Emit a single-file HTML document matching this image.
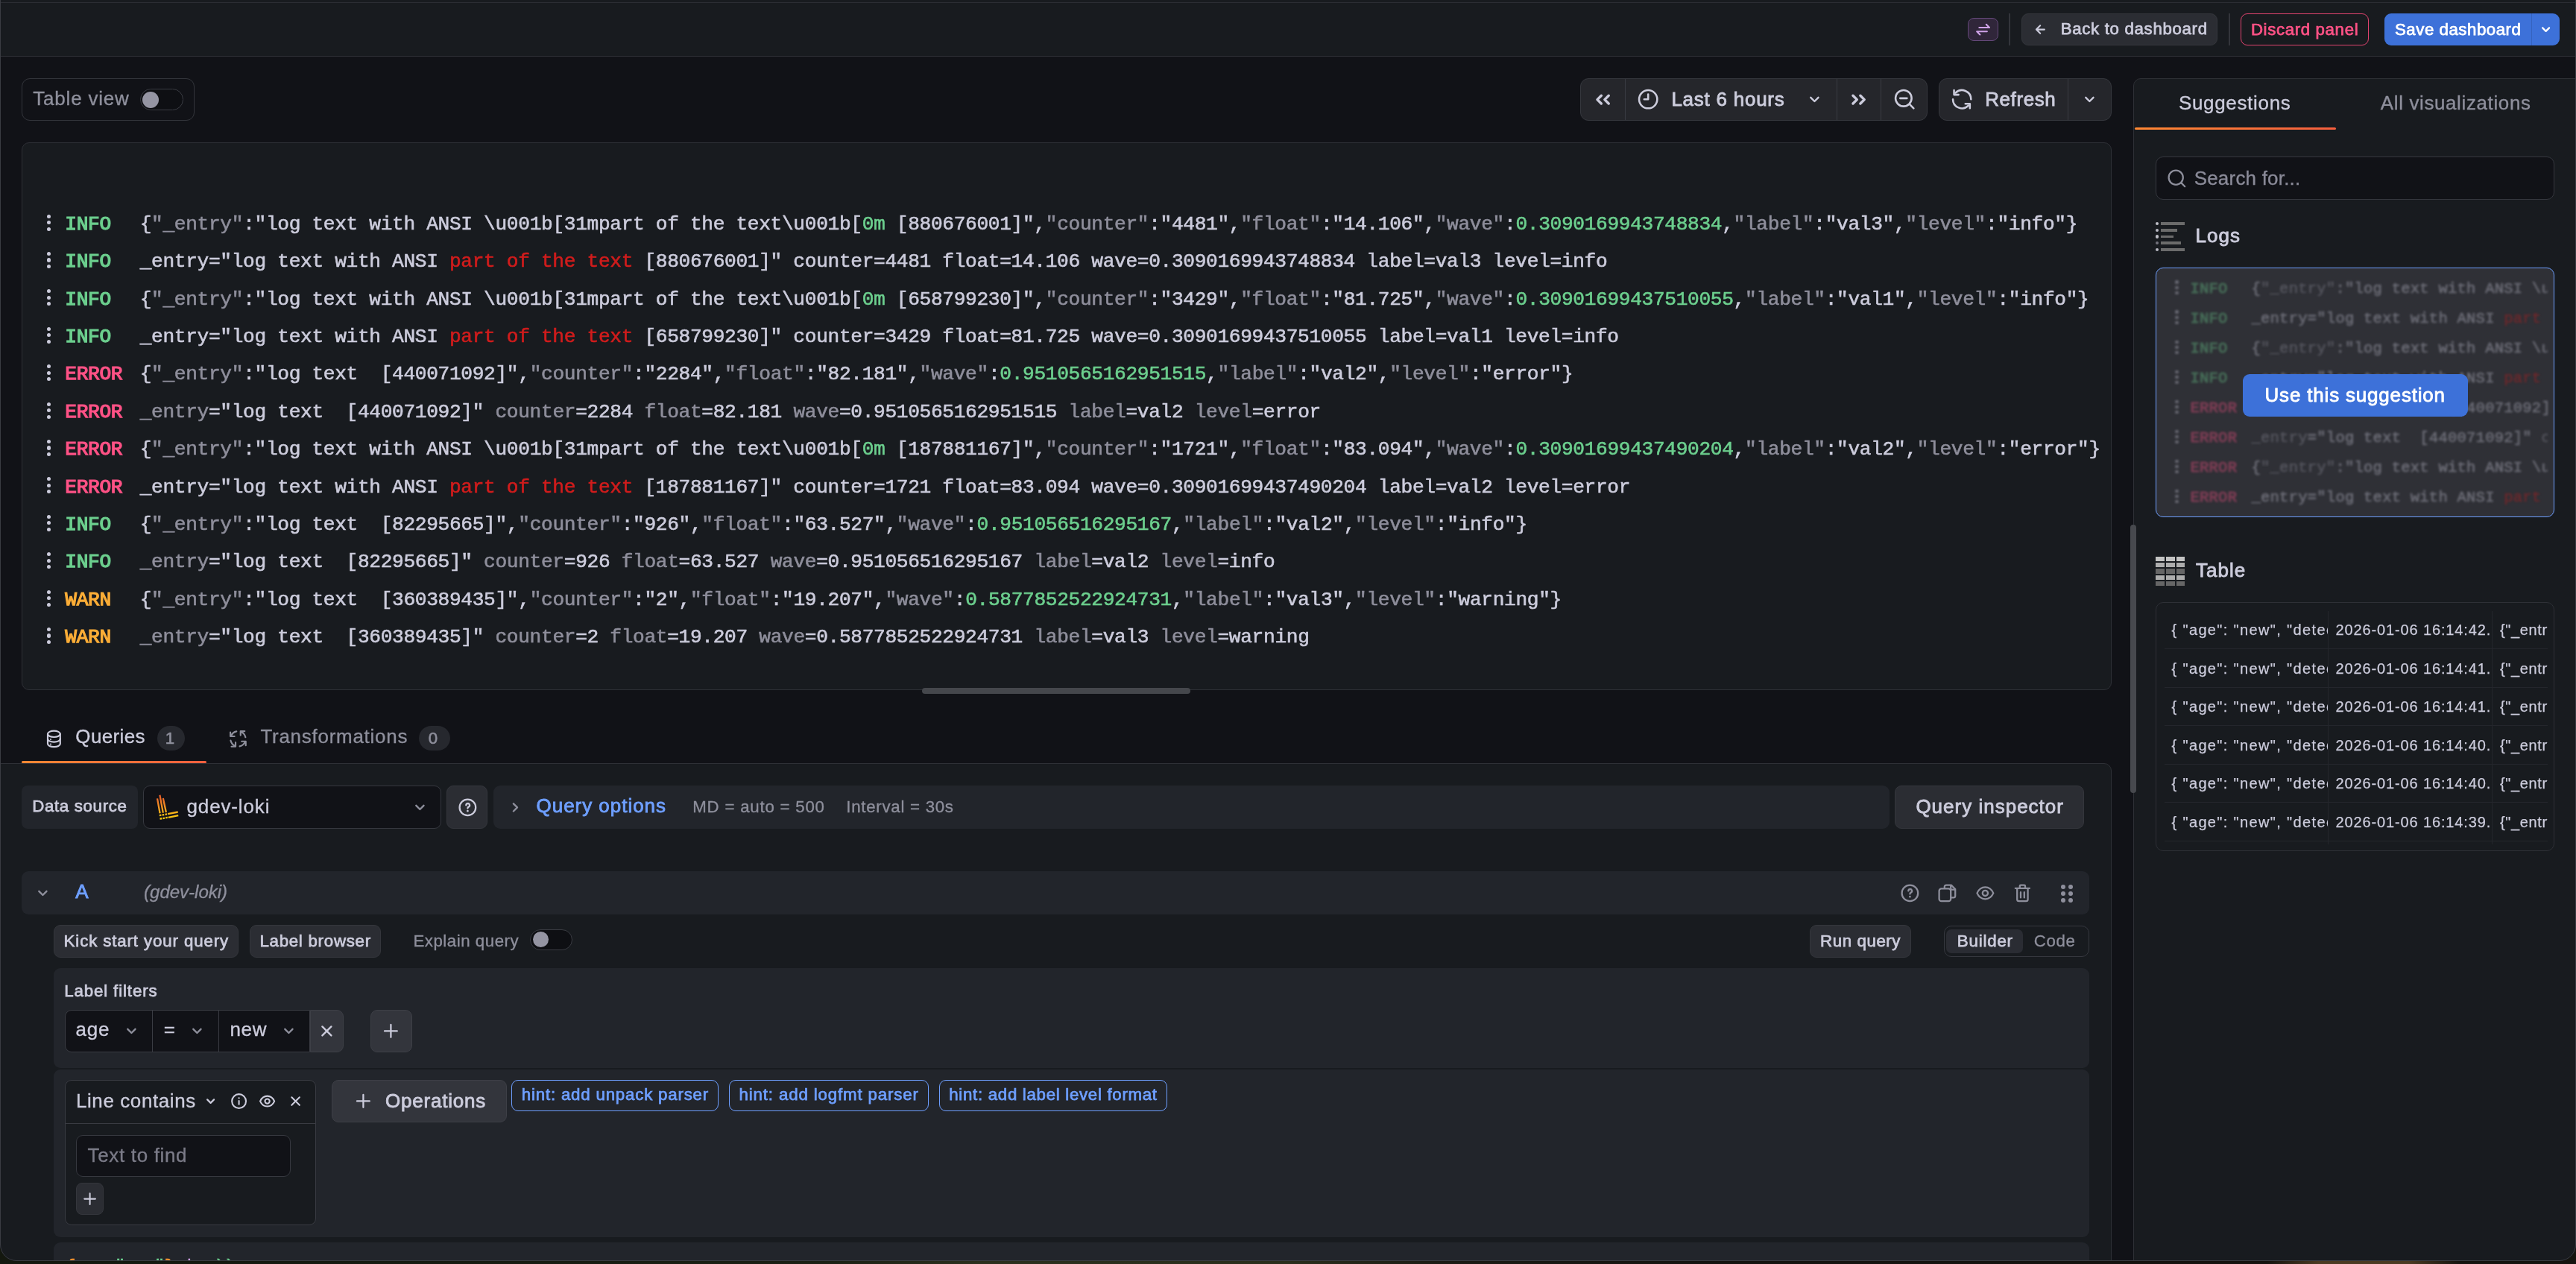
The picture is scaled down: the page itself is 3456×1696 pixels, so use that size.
<!DOCTYPE html>
<html lang="en"><head><meta charset="utf-8"><title>Edit panel - Grafana</title><style>
html,body{margin:0;padding:0;}
body{width:3456px;height:1696px;overflow:hidden;position:relative;background:linear-gradient(90deg,#14180f 0%,#161b11 17%,#1b2014 32%,#2b2f1d 38%,#2a2e1c 50%,#1b1b14 56%,#141310 67%,#15130f 88%,#4b3a22 90%,#4b3a22 93.500%,#15140f 95.500%,#15140f 100%);font-family:"Liberation Sans",sans-serif;}
#win{will-change:transform;position:absolute;left:0;top:0;width:3456px;height:1692px;overflow:hidden;border-radius:0 0 22px 22px;background:#111217;}
.b{position:absolute;box-sizing:border-box;}
.t{position:absolute;white-space:pre;font-family:"Liberation Sans",sans-serif;}
.m{font-family:"Liberation Mono",monospace;}
.i{position:absolute;overflow:visible;}
#frame{position:absolute;left:0;top:-30px;width:3456px;height:1722px;box-sizing:border-box;border:1px solid #3a3c42;border-radius:0 0 22px 22px;pointer-events:none;}
</style></head><body><div id="win">
<div class="b" style="left:0.0px;top:0.0px;width:3456.0px;height:1692.0px;background:#111217;border-radius:0 0 20px 20px;"></div>
<div class="b" style="left:0.0px;top:0.0px;width:3456.0px;height:4.0px;background:#181b1f;"></div>
<div class="b" style="left:0.0px;top:3.0px;width:3456.0px;height:1.0px;background:#2c2e34;"></div>
<div class="b" style="left:0.0px;top:4.0px;width:3456.0px;height:71.0px;background:#181b1f;"></div>
<div class="b" style="left:0.0px;top:75.0px;width:3456.0px;height:1.0px;background:#2e3036;"></div>
<div class="b" style="left:2640.0px;top:24.0px;width:41.0px;height:31.0px;background:#30263a;border:1px solid #65487a;border-radius:8px;"></div>
<svg class="i" style="left:2648.1px;top:26.8px;" width="25.2" height="25.2" viewBox="0 0 24 24" fill="none" stroke="#cfa3e8" stroke-width="2" stroke-linecap="round" stroke-linejoin="round"><path d="M7 9.500h13l-4-4M17 14.500H4l4 4"/></svg>
<div class="b" style="left:2695.0px;top:18.0px;width:2.0px;height:43.0px;background:#33353b;"></div>
<div class="b" style="left:2712.0px;top:18.0px;width:263.0px;height:43.0px;background:#2b2d33;border:1px solid #34363c;border-radius:9px;"></div>
<svg class="i" style="left:2725.3px;top:27.1px;" width="25.2" height="25.2" viewBox="0 0 24 24" fill="none" stroke="#ccccdc" stroke-width="2" stroke-linecap="round" stroke-linejoin="round"><path d="M17 12H7M11.600 7l-5 5 5 5"/></svg>
<span class="t" id="t1" style="left:2764.70px;top:25.39px;font-size:22.25px;line-height:27px;letter-spacing:0.678px;color:#ccccdc;-webkit-text-stroke:0.75px #ccccdc;">Back to dashboard</span>
<div class="b" style="left:2990.0px;top:18.0px;width:2.0px;height:43.0px;background:#33353b;"></div>
<div class="b" style="left:3006.0px;top:18.0px;width:172.0px;height:43.0px;border:1px solid #e0436f;border-radius:9px;"></div>
<span class="t" id="t2" style="left:3019.90px;top:25.59px;font-size:22.25px;line-height:27px;letter-spacing:0.638px;color:#ff5286;-webkit-text-stroke:0.75px #ff5286;">Discard panel</span>
<div class="b" style="left:3199.0px;top:18.0px;width:235.0px;height:43.0px;background:#3d71d9;border-radius:9px;"></div>
<div class="b" style="left:3395.5px;top:18.0px;width:1.0px;height:43.0px;background:#3563bd;"></div>
<span class="t" id="t3" style="left:3213.00px;top:25.59px;font-size:22.25px;line-height:27px;letter-spacing:0.526px;color:#ffffff;-webkit-text-stroke:0.75px #ffffff;">Save dashboard</span>
<svg class="i" style="left:3403.2px;top:27.0px;" width="25.2" height="25.2" viewBox="0 0 24 24" fill="none" stroke="#ffffff" stroke-width="2.2" stroke-linecap="round" stroke-linejoin="round"><path d="M7.750 9.900l4.250 4.250 4.250-4.250"/></svg>
<div class="b" style="left:29.0px;top:105.0px;width:232.0px;height:57.0px;border:1px solid #33353b;border-radius:11px;"></div>
<span class="t" id="t4" style="left:44.30px;top:117.30px;font-size:25.96px;line-height:31px;letter-spacing:0.810px;color:#8e8f9c;-webkit-text-stroke:0.35px #8e8f9c;">Table view</span>
<div class="b" style="left:188.0px;top:119.0px;width:58.0px;height:29.0px;background:#0e0f13;border:1px solid #3a3c43;border-radius:15px;"></div>
<div class="b" style="left:191.0px;top:122.5px;width:22.0px;height:22.0px;background:#9595a3;border-radius:11px;"></div>
<div class="b" style="left:2120.0px;top:105.0px;width:466.0px;height:57.0px;background:#25262b;border:1px solid #35373d;border-radius:11px;"></div>
<div class="b" style="left:2180.0px;top:106.0px;width:1.0px;height:55.0px;background:#393b42;"></div>
<div class="b" style="left:2464.0px;top:106.0px;width:1.0px;height:55.0px;background:#393b42;"></div>
<div class="b" style="left:2523.0px;top:106.0px;width:1.0px;height:55.0px;background:#393b42;"></div>
<svg class="i" style="left:2129.2px;top:111.9px;" width="43.2" height="43.2" viewBox="0 0 24 24" fill="none" stroke="#ccccdc" stroke-width="1.9" stroke-linecap="round" stroke-linejoin="round"><path d="M10.750 9l-3 3 3 3M16.250 9l-3 3 3 3"/></svg>
<svg class="i" style="left:2195.0px;top:116.8px;" width="32.4" height="32.4" viewBox="0 0 24 24" fill="none" stroke="#ccccdc" stroke-width="1.9" stroke-linecap="round" stroke-linejoin="round"><circle cx="12" cy="12" r="9"/><path d="M12 7v5H8"/></svg>
<span class="t" id="t5" style="left:2242.40px;top:118.30px;font-size:25.96px;line-height:31px;letter-spacing:0.775px;color:#ccccdc;-webkit-text-stroke:0.85px #ccccdc;">Last 6 hours</span>
<svg class="i" style="left:2420.2px;top:119.1px;" width="28.8" height="28.8" viewBox="0 0 24 24" fill="none" stroke="#ccccdc" stroke-width="2" stroke-linecap="round" stroke-linejoin="round"><path d="M7.750 9.900l4.250 4.250 4.250-4.250"/></svg>
<svg class="i" style="left:2471.9px;top:111.9px;" width="43.2" height="43.2" viewBox="0 0 24 24" fill="none" stroke="#ccccdc" stroke-width="1.9" stroke-linecap="round" stroke-linejoin="round"><path d="M13.250 9l3 3-3 3M7.750 9l3 3-3 3"/></svg>
<svg class="i" style="left:2539.2px;top:117.0px;" width="32.4" height="32.4" viewBox="0 0 24 24" fill="none" stroke="#ccccdc" stroke-width="1.9" stroke-linecap="round" stroke-linejoin="round"><circle cx="11" cy="11" r="8"/><path d="M7.600 11h6.800M17 17l4 4"/></svg>
<div class="b" style="left:2601.0px;top:105.0px;width:232.0px;height:57.0px;background:#25262b;border:1px solid #35373d;border-radius:11px;"></div>
<div class="b" style="left:2774.0px;top:106.0px;width:1.0px;height:55.0px;background:#393b42;"></div>
<svg class="i" style="left:2615.5px;top:117.0px;" width="32.4" height="32.4" viewBox="0 0 24 24" fill="none" stroke="#ccccdc" stroke-width="1.9" stroke-linecap="round" stroke-linejoin="round"><path d="M21 12A9 9 0 0 0 5.600 5.700M3 12a9 9 0 0 0 15.400 6.300"/><path d="M4.120 3v4.500h4.500M19.880 21v-4.500h-4.500"/></svg>
<span class="t" id="t6" style="left:2663.20px;top:118.30px;font-size:25.96px;line-height:31px;letter-spacing:0.617px;color:#ccccdc;-webkit-text-stroke:0.85px #ccccdc;">Refresh</span>
<svg class="i" style="left:2789.1px;top:119.1px;" width="28.8" height="28.8" viewBox="0 0 24 24" fill="none" stroke="#ccccdc" stroke-width="2" stroke-linecap="round" stroke-linejoin="round"><path d="M7.750 9.900l4.250 4.250 4.250-4.250"/></svg>
<div class="b" style="left:29.0px;top:191.0px;width:2804.0px;height:735.0px;background:#181b1f;border:1px solid #2e3036;border-radius:10px;"></div>
<div class="b" style="left:1236.7px;top:923.0px;width:360.4px;height:7.7px;background:#45474c;border-radius:4px;"></div>
<div class="b" style="left:62.7px;top:287.5px;width:5.2px;height:5.2px;border-radius:50%;background:#ccccdc"></div>
<div class="b" style="left:62.7px;top:296.0px;width:5.2px;height:5.2px;border-radius:50%;background:#ccccdc"></div>
<div class="b" style="left:62.7px;top:304.5px;width:5.2px;height:5.2px;border-radius:50%;background:#ccccdc"></div>
<span class="t m" style="left:87.30px;top:285.81px;font-size:26.2px;line-height:31px;letter-spacing:-0.335px;color:#ccccdc;-webkit-text-stroke:1.25px;"><span style="color:#6ccf8e">INFO</span></span>
<span class="t m" style="left:187.70px;top:285.81px;font-size:26.2px;line-height:31px;letter-spacing:-0.335px;color:#ccccdc;-webkit-text-stroke:0.6px;">{<span style="color:#8e8e9b">"_entry"</span>:"log text with ANSI \u001b[31mpart of the text\u001b[<span style="color:#6ccf8e">0m</span> [880676001]",<span style="color:#8e8e9b">"counter"</span>:"4481",<span style="color:#8e8e9b">"float"</span>:"14.106",<span style="color:#8e8e9b">"wave"</span>:<span style="color:#6ccf8e">0.3090169943748834</span>,<span style="color:#8e8e9b">"label"</span>:"val3",<span style="color:#8e8e9b">"level"</span>:"info"}</span>
<div class="b" style="left:62.7px;top:337.9px;width:5.2px;height:5.2px;border-radius:50%;background:#ccccdc"></div>
<div class="b" style="left:62.7px;top:346.4px;width:5.2px;height:5.2px;border-radius:50%;background:#ccccdc"></div>
<div class="b" style="left:62.7px;top:354.9px;width:5.2px;height:5.2px;border-radius:50%;background:#ccccdc"></div>
<span class="t m" style="left:87.30px;top:336.21px;font-size:26.2px;line-height:31px;letter-spacing:-0.335px;color:#ccccdc;-webkit-text-stroke:1.25px;"><span style="color:#6ccf8e">INFO</span></span>
<span class="t m" style="left:187.70px;top:336.21px;font-size:26.2px;line-height:31px;letter-spacing:-0.335px;color:#ccccdc;-webkit-text-stroke:0.6px;">_entry="log text with ANSI <span style="color:#d01c1c">part of the text</span> [880676001]" counter=4481 float=14.106 wave=0.3090169943748834 label=val3 level=info </span>
<div class="b" style="left:62.7px;top:388.3px;width:5.2px;height:5.2px;border-radius:50%;background:#ccccdc"></div>
<div class="b" style="left:62.7px;top:396.8px;width:5.2px;height:5.2px;border-radius:50%;background:#ccccdc"></div>
<div class="b" style="left:62.7px;top:405.3px;width:5.2px;height:5.2px;border-radius:50%;background:#ccccdc"></div>
<span class="t m" style="left:87.30px;top:386.61px;font-size:26.2px;line-height:31px;letter-spacing:-0.335px;color:#ccccdc;-webkit-text-stroke:1.25px;"><span style="color:#6ccf8e">INFO</span></span>
<span class="t m" style="left:187.70px;top:386.61px;font-size:26.2px;line-height:31px;letter-spacing:-0.335px;color:#ccccdc;-webkit-text-stroke:0.6px;">{<span style="color:#8e8e9b">"_entry"</span>:"log text with ANSI \u001b[31mpart of the text\u001b[<span style="color:#6ccf8e">0m</span> [658799230]",<span style="color:#8e8e9b">"counter"</span>:"3429",<span style="color:#8e8e9b">"float"</span>:"81.725",<span style="color:#8e8e9b">"wave"</span>:<span style="color:#6ccf8e">0.30901699437510055</span>,<span style="color:#8e8e9b">"label"</span>:"val1",<span style="color:#8e8e9b">"level"</span>:"info"}</span>
<div class="b" style="left:62.7px;top:438.7px;width:5.2px;height:5.2px;border-radius:50%;background:#ccccdc"></div>
<div class="b" style="left:62.7px;top:447.2px;width:5.2px;height:5.2px;border-radius:50%;background:#ccccdc"></div>
<div class="b" style="left:62.7px;top:455.7px;width:5.2px;height:5.2px;border-radius:50%;background:#ccccdc"></div>
<span class="t m" style="left:87.30px;top:437.01px;font-size:26.2px;line-height:31px;letter-spacing:-0.335px;color:#ccccdc;-webkit-text-stroke:1.25px;"><span style="color:#6ccf8e">INFO</span></span>
<span class="t m" style="left:187.70px;top:437.01px;font-size:26.2px;line-height:31px;letter-spacing:-0.335px;color:#ccccdc;-webkit-text-stroke:0.6px;">_entry="log text with ANSI <span style="color:#d01c1c">part of the text</span> [658799230]" counter=3429 float=81.725 wave=0.30901699437510055 label=val1 level=info </span>
<div class="b" style="left:62.7px;top:489.1px;width:5.2px;height:5.2px;border-radius:50%;background:#ccccdc"></div>
<div class="b" style="left:62.7px;top:497.6px;width:5.2px;height:5.2px;border-radius:50%;background:#ccccdc"></div>
<div class="b" style="left:62.7px;top:506.1px;width:5.2px;height:5.2px;border-radius:50%;background:#ccccdc"></div>
<span class="t m" style="left:87.30px;top:487.41px;font-size:26.2px;line-height:31px;letter-spacing:-0.335px;color:#ccccdc;-webkit-text-stroke:1.25px;"><span style="color:#ff5286">ERROR</span></span>
<span class="t m" style="left:187.70px;top:487.41px;font-size:26.2px;line-height:31px;letter-spacing:-0.335px;color:#ccccdc;-webkit-text-stroke:0.6px;">{<span style="color:#8e8e9b">"_entry"</span>:"log text  [440071092]",<span style="color:#8e8e9b">"counter"</span>:"2284",<span style="color:#8e8e9b">"float"</span>:"82.181",<span style="color:#8e8e9b">"wave"</span>:<span style="color:#6ccf8e">0.9510565162951515</span>,<span style="color:#8e8e9b">"label"</span>:"val2",<span style="color:#8e8e9b">"level"</span>:"error"}</span>
<div class="b" style="left:62.7px;top:539.5px;width:5.2px;height:5.2px;border-radius:50%;background:#ccccdc"></div>
<div class="b" style="left:62.7px;top:548.0px;width:5.2px;height:5.2px;border-radius:50%;background:#ccccdc"></div>
<div class="b" style="left:62.7px;top:556.5px;width:5.2px;height:5.2px;border-radius:50%;background:#ccccdc"></div>
<span class="t m" style="left:87.30px;top:537.81px;font-size:26.2px;line-height:31px;letter-spacing:-0.335px;color:#ccccdc;-webkit-text-stroke:1.25px;"><span style="color:#ff5286">ERROR</span></span>
<span class="t m" style="left:187.70px;top:537.81px;font-size:26.2px;line-height:31px;letter-spacing:-0.335px;color:#ccccdc;-webkit-text-stroke:0.6px;"><span style="color:#8e8e9b">_entry</span>="log text  [440071092]" <span style="color:#8e8e9b">counter</span>=2284 <span style="color:#8e8e9b">float</span>=82.181 <span style="color:#8e8e9b">wave</span>=0.9510565162951515 <span style="color:#8e8e9b">label</span>=val2 <span style="color:#8e8e9b">level</span>=error </span>
<div class="b" style="left:62.7px;top:589.9px;width:5.2px;height:5.2px;border-radius:50%;background:#ccccdc"></div>
<div class="b" style="left:62.7px;top:598.4px;width:5.2px;height:5.2px;border-radius:50%;background:#ccccdc"></div>
<div class="b" style="left:62.7px;top:606.9px;width:5.2px;height:5.2px;border-radius:50%;background:#ccccdc"></div>
<span class="t m" style="left:87.30px;top:588.21px;font-size:26.2px;line-height:31px;letter-spacing:-0.335px;color:#ccccdc;-webkit-text-stroke:1.25px;"><span style="color:#ff5286">ERROR</span></span>
<span class="t m" style="left:187.70px;top:588.21px;font-size:26.2px;line-height:31px;letter-spacing:-0.335px;color:#ccccdc;-webkit-text-stroke:0.6px;">{<span style="color:#8e8e9b">"_entry"</span>:"log text with ANSI \u001b[31mpart of the text\u001b[<span style="color:#6ccf8e">0m</span> [187881167]",<span style="color:#8e8e9b">"counter"</span>:"1721",<span style="color:#8e8e9b">"float"</span>:"83.094",<span style="color:#8e8e9b">"wave"</span>:<span style="color:#6ccf8e">0.30901699437490204</span>,<span style="color:#8e8e9b">"label"</span>:"val2",<span style="color:#8e8e9b">"level"</span>:"error"}</span>
<div class="b" style="left:62.7px;top:640.3px;width:5.2px;height:5.2px;border-radius:50%;background:#ccccdc"></div>
<div class="b" style="left:62.7px;top:648.8px;width:5.2px;height:5.2px;border-radius:50%;background:#ccccdc"></div>
<div class="b" style="left:62.7px;top:657.3px;width:5.2px;height:5.2px;border-radius:50%;background:#ccccdc"></div>
<span class="t m" style="left:87.30px;top:638.61px;font-size:26.2px;line-height:31px;letter-spacing:-0.335px;color:#ccccdc;-webkit-text-stroke:1.25px;"><span style="color:#ff5286">ERROR</span></span>
<span class="t m" style="left:187.70px;top:638.61px;font-size:26.2px;line-height:31px;letter-spacing:-0.335px;color:#ccccdc;-webkit-text-stroke:0.6px;">_entry="log text with ANSI <span style="color:#d01c1c">part of the text</span> [187881167]" counter=1721 float=83.094 wave=0.30901699437490204 label=val2 level=error </span>
<div class="b" style="left:62.7px;top:690.7px;width:5.2px;height:5.2px;border-radius:50%;background:#ccccdc"></div>
<div class="b" style="left:62.7px;top:699.2px;width:5.2px;height:5.2px;border-radius:50%;background:#ccccdc"></div>
<div class="b" style="left:62.7px;top:707.7px;width:5.2px;height:5.2px;border-radius:50%;background:#ccccdc"></div>
<span class="t m" style="left:87.30px;top:689.01px;font-size:26.2px;line-height:31px;letter-spacing:-0.335px;color:#ccccdc;-webkit-text-stroke:1.25px;"><span style="color:#6ccf8e">INFO</span></span>
<span class="t m" style="left:187.70px;top:689.01px;font-size:26.2px;line-height:31px;letter-spacing:-0.335px;color:#ccccdc;-webkit-text-stroke:0.6px;">{<span style="color:#8e8e9b">"_entry"</span>:"log text  [82295665]",<span style="color:#8e8e9b">"counter"</span>:"926",<span style="color:#8e8e9b">"float"</span>:"63.527",<span style="color:#8e8e9b">"wave"</span>:<span style="color:#6ccf8e">0.951056516295167</span>,<span style="color:#8e8e9b">"label"</span>:"val2",<span style="color:#8e8e9b">"level"</span>:"info"}</span>
<div class="b" style="left:62.7px;top:741.1px;width:5.2px;height:5.2px;border-radius:50%;background:#ccccdc"></div>
<div class="b" style="left:62.7px;top:749.6px;width:5.2px;height:5.2px;border-radius:50%;background:#ccccdc"></div>
<div class="b" style="left:62.7px;top:758.1px;width:5.2px;height:5.2px;border-radius:50%;background:#ccccdc"></div>
<span class="t m" style="left:87.30px;top:739.41px;font-size:26.2px;line-height:31px;letter-spacing:-0.335px;color:#ccccdc;-webkit-text-stroke:1.25px;"><span style="color:#6ccf8e">INFO</span></span>
<span class="t m" style="left:187.70px;top:739.41px;font-size:26.2px;line-height:31px;letter-spacing:-0.335px;color:#ccccdc;-webkit-text-stroke:0.6px;"><span style="color:#8e8e9b">_entry</span>="log text  [82295665]" <span style="color:#8e8e9b">counter</span>=926 <span style="color:#8e8e9b">float</span>=63.527 <span style="color:#8e8e9b">wave</span>=0.951056516295167 <span style="color:#8e8e9b">label</span>=val2 <span style="color:#8e8e9b">level</span>=info </span>
<div class="b" style="left:62.7px;top:791.5px;width:5.2px;height:5.2px;border-radius:50%;background:#ccccdc"></div>
<div class="b" style="left:62.7px;top:800.0px;width:5.2px;height:5.2px;border-radius:50%;background:#ccccdc"></div>
<div class="b" style="left:62.7px;top:808.5px;width:5.2px;height:5.2px;border-radius:50%;background:#ccccdc"></div>
<span class="t m" style="left:87.30px;top:789.81px;font-size:26.2px;line-height:31px;letter-spacing:-0.335px;color:#ccccdc;-webkit-text-stroke:1.25px;"><span style="color:#fbad37">WARN</span></span>
<span class="t m" style="left:187.70px;top:789.81px;font-size:26.2px;line-height:31px;letter-spacing:-0.335px;color:#ccccdc;-webkit-text-stroke:0.6px;">{<span style="color:#8e8e9b">"_entry"</span>:"log text  [360389435]",<span style="color:#8e8e9b">"counter"</span>:"2",<span style="color:#8e8e9b">"float"</span>:"19.207",<span style="color:#8e8e9b">"wave"</span>:<span style="color:#6ccf8e">0.5877852522924731</span>,<span style="color:#8e8e9b">"label"</span>:"val3",<span style="color:#8e8e9b">"level"</span>:"warning"}</span>
<div class="b" style="left:62.7px;top:841.9px;width:5.2px;height:5.2px;border-radius:50%;background:#ccccdc"></div>
<div class="b" style="left:62.7px;top:850.4px;width:5.2px;height:5.2px;border-radius:50%;background:#ccccdc"></div>
<div class="b" style="left:62.7px;top:858.9px;width:5.2px;height:5.2px;border-radius:50%;background:#ccccdc"></div>
<span class="t m" style="left:87.30px;top:840.21px;font-size:26.2px;line-height:31px;letter-spacing:-0.335px;color:#ccccdc;-webkit-text-stroke:1.25px;"><span style="color:#fbad37">WARN</span></span>
<span class="t m" style="left:187.70px;top:840.21px;font-size:26.2px;line-height:31px;letter-spacing:-0.335px;color:#ccccdc;-webkit-text-stroke:0.6px;"><span style="color:#8e8e9b">_entry</span>="log text  [360389435]" <span style="color:#8e8e9b">counter</span>=2 <span style="color:#8e8e9b">float</span>=19.207 <span style="color:#8e8e9b">wave</span>=0.5877852522924731 <span style="color:#8e8e9b">label</span>=val3 <span style="color:#8e8e9b">level</span>=warning </span>
<svg class="i" style="left:57.8px;top:977.3px;" width="28.8" height="28.8" viewBox="0 0 24 24" fill="none" stroke="#ccccdc" stroke-width="1.8" stroke-linecap="round" stroke-linejoin="round"><path d="M5 6.500C5 4.600 8.100 3 12 3s7 1.600 7 3.500v11c0 1.900-3.100 3.500-7 3.500s-7-1.600-7-3.500z"/><path d="M5 6.500C5 8.400 8.100 10 12 10s7-1.600 7-3.500M5 12c0 1.900 3.100 3.500 7 3.500s7-1.600 7-3.500"/><circle cx="8.300" cy="12.600" r=".350" stroke-width="1.200"/><circle cx="8.300" cy="18" r=".350" stroke-width="1.200"/></svg>
<span class="t" id="t7" style="left:101.30px;top:973.00px;font-size:25.96px;line-height:31px;letter-spacing:0.400px;color:#ccccdc;-webkit-text-stroke:0.35px #ccccdc;">Queries</span>
<div class="b" style="left:210.5px;top:974.0px;width:37.5px;height:33.0px;background:#26282e;border-radius:17px;"></div>
<span class="t" id="t8" style="left:221.80px;top:976.59px;font-size:22.25px;line-height:27px;letter-spacing:0.000px;color:#8e8f9c;-webkit-text-stroke:0.6px #8e8f9c;">1</span>
<svg class="i" style="left:305.0px;top:977.3px;" width="28.8" height="28.8" viewBox="0 0 24 24" fill="none" stroke="#8e8f9c" stroke-width="1.8" stroke-linecap="round" stroke-linejoin="round"><path d="M4.18 8.68A8.500 8.500 0 0 1 10.23 3.69M3.400 4.600v4.600h4.600"/><g transform="rotate(90 12 12)"><path d="M4.18 8.68A8.500 8.500 0 0 1 10.23 3.69M3.400 4.600v4.600h4.600"/></g><g transform="rotate(180 12 12)"><path d="M4.18 8.68A8.500 8.500 0 0 1 10.23 3.69M3.400 4.600v4.600h4.600"/></g><g transform="rotate(270 12 12)"><path d="M4.18 8.68A8.500 8.500 0 0 1 10.23 3.69M3.400 4.600v4.600h4.600"/></g></svg>
<span class="t" id="t9" style="left:349.40px;top:973.00px;font-size:25.96px;line-height:31px;letter-spacing:0.750px;color:#8e8f9c;-webkit-text-stroke:0.35px #8e8f9c;">Transformations</span>
<div class="b" style="left:561.5px;top:974.0px;width:42.0px;height:33.0px;background:#26282e;border-radius:17px;"></div>
<span class="t" id="t10" style="left:574.80px;top:976.59px;font-size:22.25px;line-height:27px;letter-spacing:0.000px;color:#8e8f9c;-webkit-text-stroke:0.6px #8e8f9c;">0</span>
<div class="b" style="left:-4.0px;top:1024.0px;width:2837.0px;height:676.0px;background:#181b1f;border:1px solid #2e3036;border-radius:0 10px 0 0;"></div>
<div class="b" style="left:29.4px;top:1020.5px;width:247.4px;height:3.7px;border-radius:2px;background:linear-gradient(90deg,#ff8833,#f55f3e);"></div>
<div class="b" style="left:29.4px;top:1054.0px;width:155.2px;height:58.0px;background:#22252b;border-radius:8px;"></div>
<span class="t" id="t11" style="left:43.20px;top:1068.39px;font-size:22.25px;line-height:27px;letter-spacing:0.673px;color:#ccccdc;-webkit-text-stroke:0.75px #ccccdc;">Data source</span>
<div class="b" style="left:192.3px;top:1054.0px;width:399.3px;height:58.0px;background:#111217;border:1px solid #36383f;border-radius:9px;"></div>
<span class="t" id="t12" style="left:250.50px;top:1066.50px;font-size:25.96px;line-height:31px;letter-spacing:0.888px;color:#ccccdc;-webkit-text-stroke:0.35px #ccccdc;">gdev-loki</span>
<svg class="i" style="left:549.3px;top:1069.2px;" width="28.8" height="28.8" viewBox="0 0 24 24" fill="none" stroke="#8e8f9c" stroke-width="2" stroke-linecap="round" stroke-linejoin="round"><path d="M7.750 9.900l4.250 4.250 4.250-4.250"/></svg>
<div class="b" style="left:599.3px;top:1054.0px;width:55.2px;height:58.0px;background:#2b2d33;border:1px solid #34363c;border-radius:9px;"></div>
<svg class="i" style="left:613.0px;top:1068.8px;" width="28.8" height="28.8" viewBox="0 0 24 24" fill="none" stroke="#ccccdc" stroke-width="1.9" stroke-linecap="round" stroke-linejoin="round"><circle cx="12" cy="12" r="9"/><path d="M10.250 9.500a2 2 0 1 1 2.750 1.850c-.600.300-1 .800-1 1.650"/><circle cx="12" cy="16" r=".550" stroke-width="1.200"/></svg>
<div class="b" style="left:662.0px;top:1054.0px;width:1873.0px;height:58.0px;background:#22252b;border-radius:9px;"></div>
<svg class="i" style="left:676.6px;top:1069.4px;" width="28.8" height="28.8" viewBox="0 0 24 24" fill="none" stroke="#8e8f9c" stroke-width="2" stroke-linecap="round" stroke-linejoin="round"><path d="M9.900 7.750l4.250 4.250-4.250 4.250"/></svg>
<span class="t" id="t13" style="left:719.60px;top:1066.30px;font-size:25.96px;line-height:31px;letter-spacing:0.982px;color:#6e9fff;-webkit-text-stroke:0.85px #6e9fff;">Query options</span>
<span class="t" id="t14" style="left:929.30px;top:1068.79px;font-size:22.25px;line-height:27px;letter-spacing:0.782px;color:#8e8f9c;-webkit-text-stroke:0.35px #8e8f9c;">MD = auto = 500</span>
<span class="t" id="t15" style="left:1135.30px;top:1068.79px;font-size:22.25px;line-height:27px;letter-spacing:0.731px;color:#8e8f9c;-webkit-text-stroke:0.35px #8e8f9c;">Interval = 30s</span>
<div class="b" style="left:2542.0px;top:1054.0px;width:254.0px;height:58.0px;background:#2b2d33;border:1px solid #34363c;border-radius:9px;"></div>
<span class="t" id="t16" style="left:2570.40px;top:1067.20px;font-size:25.96px;line-height:31px;letter-spacing:1.025px;color:#ccccdc;-webkit-text-stroke:0.85px #ccccdc;">Query inspector</span>
<svg class="i" style="left:205px;top:1062px" width="40" height="42" viewBox="205 1062 40 42">
<defs><linearGradient id="lk" x1="0" y1="1066" x2="0" y2="1100" gradientUnits="userSpaceOnUse"><stop offset="0" stop-color="#e9572b"/><stop offset=".55" stop-color="#f49b22"/><stop offset="1" stop-color="#fbd20a"/></linearGradient></defs>
<g stroke="url(#lk)" stroke-width="2.300" fill="none">
<path d="M211 1071.400L214.600 1091.300M214.400 1066.800L218.800 1090.600M218.800 1071L222.900 1090"/>
<path d="M225.100 1092.200L238.700 1089.500M225.800 1096.800L239.200 1094.200"/>
<path stroke-dasharray="2.600 1.300" d="M213.800 1094.200L224.200 1092.300M214.500 1098.700L224.800 1096.900"/>
</g></svg>
<div class="b" style="left:29.4px;top:1169.0px;width:2773.2px;height:58.0px;background:#22252b;border-radius:9px;"></div>
<svg class="i" style="left:43.0px;top:1183.9px;" width="28.8" height="28.8" viewBox="0 0 24 24" fill="none" stroke="#8e8f9c" stroke-width="2" stroke-linecap="round" stroke-linejoin="round"><path d="M7.750 9.900l4.250 4.250 4.250-4.250"/></svg>
<span class="t" id="t17" style="left:101.30px;top:1180.70px;font-size:25.96px;line-height:31px;letter-spacing:0.000px;color:#6e9fff;-webkit-text-stroke:0.85px #6e9fff;">A</span>
<span class="t" id="t18" style="left:193.10px;top:1182.35px;font-size:24.1px;line-height:29px;letter-spacing:-0.050px;color:#8e8f9c;font-style:italic;-webkit-text-stroke:0.35px #8e8f9c;">(gdev-loki)</span>
<svg class="i" style="left:2548.0px;top:1183.8px;" width="28.8" height="28.8" viewBox="0 0 24 24" fill="none" stroke="#8e8f9c" stroke-width="1.9" stroke-linecap="round" stroke-linejoin="round"><circle cx="12" cy="12" r="9"/><path d="M10.250 9.500a2 2 0 1 1 2.750 1.850c-.600.300-1 .800-1 1.650"/><circle cx="12" cy="16" r=".550" stroke-width="1.200"/></svg>
<svg class="i" style="left:2597.8px;top:1184.1px;" width="28.8" height="28.8" viewBox="0 0 24 24" fill="none" stroke="#8e8f9c" stroke-width="1.9" stroke-linecap="round" stroke-linejoin="round"><path d="M9 6V5a2 2 0 0 1 2-2h5.500L21 7.500V15a2 2 0 0 1-2 2h-3"/><path d="M16 3.500V8h4.500"/><rect x="3" y="7" width="13" height="14" rx="2.500"/></svg>
<svg class="i" style="left:2649.0px;top:1184.0px;" width="28.8" height="28.8" viewBox="0 0 24 24" fill="none" stroke="#8e8f9c" stroke-width="1.9" stroke-linecap="round" stroke-linejoin="round"><path d="M2.900 12C4.900 7.600 8.300 5.400 12 5.400s7.100 2.200 9.100 6.600c-2 4.400-5.400 6.600-9.100 6.600S4.900 16.400 2.900 12z"/><circle cx="12" cy="12" r="3"/></svg>
<svg class="i" style="left:2699.0px;top:1184.1px;" width="28.8" height="28.8" viewBox="0 0 24 24" fill="none" stroke="#8e8f9c" stroke-width="1.9" stroke-linecap="round" stroke-linejoin="round"><path d="M4 6.500h16M9 6.500V4a1 1 0 0 1 1-1h4a1 1 0 0 1 1 1v2.500M6 6.500V19a2 2 0 0 0 2 2h8a2 2 0 0 0 2-2V6.500M10 11v6M14 11v6"/></svg>
<div class="b" style="left:2765.4px;top:1187.2px;width:5.8px;height:5.8px;background:#8e8f9c;border-radius:3px;"></div>
<div class="b" style="left:2765.4px;top:1196.3px;width:5.8px;height:5.8px;background:#8e8f9c;border-radius:3px;"></div>
<div class="b" style="left:2765.4px;top:1205.4px;width:5.8px;height:5.8px;background:#8e8f9c;border-radius:3px;"></div>
<div class="b" style="left:2775.2px;top:1187.2px;width:5.8px;height:5.8px;background:#8e8f9c;border-radius:3px;"></div>
<div class="b" style="left:2775.2px;top:1196.3px;width:5.8px;height:5.8px;background:#8e8f9c;border-radius:3px;"></div>
<div class="b" style="left:2775.2px;top:1205.4px;width:5.8px;height:5.8px;background:#8e8f9c;border-radius:3px;"></div>
<div class="b" style="left:72.0px;top:1241.3px;width:248.0px;height:43.3px;background:#2b2d33;border:1px solid #34363c;border-radius:9px;"></div>
<span class="t" id="t19" style="left:85.60px;top:1248.79px;font-size:22.25px;line-height:27px;letter-spacing:0.885px;color:#ccccdc;-webkit-text-stroke:0.75px #ccccdc;">Kick start your query</span>
<div class="b" style="left:335.2px;top:1241.3px;width:175.6px;height:43.3px;background:#2b2d33;border:1px solid #34363c;border-radius:9px;"></div>
<span class="t" id="t20" style="left:348.40px;top:1248.79px;font-size:22.25px;line-height:27px;letter-spacing:0.745px;color:#ccccdc;-webkit-text-stroke:0.75px #ccccdc;">Label browser</span>
<span class="t" id="t21" style="left:554.40px;top:1248.79px;font-size:22.25px;line-height:27px;letter-spacing:0.540px;color:#8e8f9c;-webkit-text-stroke:0.35px #8e8f9c;">Explain query</span>
<div class="b" style="left:711.0px;top:1246.5px;width:56.5px;height:28.3px;background:#0e0f13;border:1px solid #3a3c43;border-radius:15px;"></div>
<div class="b" style="left:714.5px;top:1249.8px;width:21.5px;height:21.5px;background:#9595a3;border-radius:11px;"></div>
<div class="b" style="left:2428.0px;top:1241.3px;width:136.0px;height:43.3px;background:#2b2d33;border:1px solid #34363c;border-radius:9px;"></div>
<span class="t" id="t22" style="left:2442.00px;top:1248.79px;font-size:22.25px;line-height:27px;letter-spacing:0.605px;color:#ccccdc;-webkit-text-stroke:0.75px #ccccdc;">Run query</span>
<div class="b" style="left:2607.5px;top:1242.4px;width:195.1px;height:41.2px;border:1px solid #36383f;border-radius:10px;"></div>
<div class="b" style="left:2611.0px;top:1247.0px;width:103.0px;height:32.0px;background:#2a2c33;border-radius:7px;"></div>
<span class="t" id="t23" style="left:2625.80px;top:1248.79px;font-size:22.25px;line-height:27px;letter-spacing:0.823px;color:#ccccdc;-webkit-text-stroke:0.75px #ccccdc;">Builder</span>
<span class="t" id="t24" style="left:2728.80px;top:1248.79px;font-size:22.25px;line-height:27px;letter-spacing:0.602px;color:#8e8f9c;-webkit-text-stroke:0.3px #8e8f9c;">Code</span>
<div class="b" style="left:72.0px;top:1299.0px;width:2730.6px;height:134.0px;background:#22252b;border-radius:9px;"></div>
<span class="t" id="t25" style="left:86.20px;top:1316.19px;font-size:22.25px;line-height:27px;letter-spacing:0.885px;color:#ccccdc;-webkit-text-stroke:0.75px #ccccdc;">Label filters</span>
<div class="b" style="left:86.7px;top:1354.5px;width:329.6px;height:57.0px;background:#111217;border:1px solid #3a3c43;border-radius:9px 0 0 9px;"></div>
<div class="b" style="left:204.3px;top:1355.5px;width:1.0px;height:55.0px;background:#3a3c43;"></div>
<div class="b" style="left:293.0px;top:1355.5px;width:1.0px;height:55.0px;background:#3a3c43;"></div>
<span class="t" id="t26" style="left:101.60px;top:1365.70px;font-size:25.96px;line-height:31px;letter-spacing:0.793px;color:#ccccdc;-webkit-text-stroke:0.35px #ccccdc;">age</span>
<svg class="i" style="left:161.5px;top:1368.8px;" width="28.8" height="28.8" viewBox="0 0 24 24" fill="none" stroke="#8e8f9c" stroke-width="2" stroke-linecap="round" stroke-linejoin="round"><path d="M7.750 9.900l4.250 4.250 4.250-4.250"/></svg>
<span class="t" id="t27" style="left:219.80px;top:1365.70px;font-size:25.96px;line-height:31px;letter-spacing:0.000px;color:#ccccdc;-webkit-text-stroke:0.35px #ccccdc;">=</span>
<svg class="i" style="left:250.1px;top:1368.8px;" width="28.8" height="28.8" viewBox="0 0 24 24" fill="none" stroke="#8e8f9c" stroke-width="2" stroke-linecap="round" stroke-linejoin="round"><path d="M7.750 9.900l4.250 4.250 4.250-4.250"/></svg>
<span class="t" id="t28" style="left:308.50px;top:1365.70px;font-size:25.96px;line-height:31px;letter-spacing:0.688px;color:#ccccdc;-webkit-text-stroke:0.35px #ccccdc;">new</span>
<svg class="i" style="left:373.1px;top:1368.8px;" width="28.8" height="28.8" viewBox="0 0 24 24" fill="none" stroke="#8e8f9c" stroke-width="2" stroke-linecap="round" stroke-linejoin="round"><path d="M7.750 9.900l4.250 4.250 4.250-4.250"/></svg>
<div class="b" style="left:416.3px;top:1354.5px;width:44.4px;height:57.0px;background:#33353c;border:1px solid #3d3f46;border-radius:0 9px 9px 0;"></div>
<svg class="i" style="left:424.1px;top:1368.6px;" width="28.8" height="28.8" viewBox="0 0 24 24" fill="none" stroke="#ccccdc" stroke-width="2" stroke-linecap="round" stroke-linejoin="round"><path d="M7 7l10 10M17 7L7 17"/></svg>
<div class="b" style="left:497.4px;top:1354.5px;width:55.4px;height:57.0px;background:#33353c;border:1px solid #3d3f46;border-radius:9px;"></div>
<svg class="i" style="left:510.0px;top:1368.9px;" width="28.8" height="28.8" viewBox="0 0 24 24" fill="none" stroke="#ccccdc" stroke-width="1.9" stroke-linecap="round" stroke-linejoin="round"><path d="M12 5v14M5 12h14"/></svg>
<div class="b" style="left:72.0px;top:1434.5px;width:2730.6px;height:225.5px;background:#22252b;border-radius:9px;"></div>
<div class="b" style="left:86.7px;top:1448.6px;width:336.9px;height:195.6px;background:#181b1f;border:1px solid #393b42;border-radius:9px;"></div>
<div class="b" style="left:87.7px;top:1507.0px;width:334.9px;height:1.0px;background:#393b42;"></div>
<span class="t" id="t29" style="left:101.90px;top:1461.50px;font-size:25.96px;line-height:31px;letter-spacing:0.618px;color:#ccccdc;-webkit-text-stroke:0.35px #ccccdc;">Line contains</span>
<svg class="i" style="left:270.3px;top:1465.2px;" width="25.2" height="25.2" viewBox="0 0 24 24" fill="none" stroke="#ccccdc" stroke-width="2.1" stroke-linecap="round" stroke-linejoin="round"><path d="M7.750 9.900l4.250 4.250 4.250-4.250"/></svg>
<svg class="i" style="left:307.8px;top:1464.8px;" width="25.2" height="25.2" viewBox="0 0 24 24" fill="none" stroke="#ccccdc" stroke-width="2" stroke-linecap="round" stroke-linejoin="round"><circle cx="12" cy="12" r="9"/><path d="M12 11.500v4.500"/><circle cx="12" cy="8" r=".450" stroke-width="1.300"/></svg>
<svg class="i" style="left:346.1px;top:1464.8px;" width="25.2" height="25.2" viewBox="0 0 24 24" fill="none" stroke="#ccccdc" stroke-width="2" stroke-linecap="round" stroke-linejoin="round"><path d="M2.900 12C4.900 7.600 8.300 5.400 12 5.400s7.100 2.200 9.100 6.600c-2 4.400-5.400 6.600-9.100 6.600S4.900 16.400 2.900 12z"/><circle cx="12" cy="12" r="3"/></svg>
<svg class="i" style="left:383.9px;top:1464.8px;" width="25.2" height="25.2" viewBox="0 0 24 24" fill="none" stroke="#ccccdc" stroke-width="2" stroke-linecap="round" stroke-linejoin="round"><path d="M7 7l10 10M17 7L7 17"/></svg>
<div class="b" style="left:102.4px;top:1522.7px;width:287.2px;height:56.8px;background:#111217;border:1px solid #36383f;border-radius:9px;"></div>
<span class="t" id="t30" style="left:117.60px;top:1535.30px;font-size:25.96px;line-height:31px;letter-spacing:0.678px;color:#7b7b88;-webkit-text-stroke:0.35px #7b7b88;">Text to find</span>
<div class="b" style="left:102.4px;top:1587.0px;width:37.1px;height:43.0px;background:#2b2d33;border:1px solid #34363c;border-radius:8px;"></div>
<svg class="i" style="left:108.4px;top:1595.9px;" width="25.2" height="25.2" viewBox="0 0 24 24" fill="none" stroke="#ccccdc" stroke-width="2" stroke-linecap="round" stroke-linejoin="round"><path d="M12 5v14M5 12h14"/></svg>
<div class="b" style="left:445.3px;top:1448.6px;width:234.4px;height:57.1px;background:#33353c;border:1px solid #3d3f46;border-radius:9px;"></div>
<svg class="i" style="left:473.0px;top:1462.6px;" width="28.8" height="28.8" viewBox="0 0 24 24" fill="none" stroke="#ccccdc" stroke-width="1.9" stroke-linecap="round" stroke-linejoin="round"><path d="M12 5v14M5 12h14"/></svg>
<span class="t" id="t31" style="left:516.90px;top:1461.50px;font-size:25.96px;line-height:31px;letter-spacing:0.823px;color:#ccccdc;-webkit-text-stroke:0.85px #ccccdc;">Operations</span>
<div class="b" style="left:686.3px;top:1448.5px;width:277.7px;height:42.2px;border:1px solid #6e9fff;border-radius:9px;"></div>
<span class="t" id="t32" style="left:699.80px;top:1455.39px;font-size:22.25px;line-height:27px;letter-spacing:0.812px;color:#6e9fff;-webkit-text-stroke:0.75px #6e9fff;">hint: add unpack parser</span>
<div class="b" style="left:978.0px;top:1448.5px;width:267.7px;height:42.2px;border:1px solid #6e9fff;border-radius:9px;"></div>
<span class="t" id="t33" style="left:991.50px;top:1455.39px;font-size:22.25px;line-height:27px;letter-spacing:0.869px;color:#6e9fff;-webkit-text-stroke:0.75px #6e9fff;">hint: add logfmt parser</span>
<div class="b" style="left:1259.8px;top:1448.5px;width:305.9px;height:42.2px;border:1px solid #6e9fff;border-radius:9px;"></div>
<span class="t" id="t34" style="left:1273.30px;top:1455.39px;font-size:22.25px;line-height:27px;letter-spacing:0.702px;color:#6e9fff;-webkit-text-stroke:0.75px #6e9fff;">hint: add label level format</span>
<div class="b" style="left:72.0px;top:1667.3px;width:2730.6px;height:52.7px;background:#22252b;border-radius:9px;"></div>
<span class="t m" style="left:88.30px;top:1685.80px;font-size:22.1px;line-height:27px;letter-spacing:-0.010px;color:#ccccdc;-webkit-text-stroke:0.6px;"><span style="color:#ff9830">{</span><span style="color:#ccccdc">age</span><span style="color:#ccccdc">=</span><span style="color:#6ccf8e">"new"</span><span style="color:#ff9830">}</span> <span style="color:#d5a6f0">|=</span> <span style="color:#6ccf8e">``</span></span>
<div class="b" style="left:2862.0px;top:105.0px;width:608.0px;height:1595.0px;background:#181b1f;border:1px solid #2e3036;border-radius:10px 0 0 0;"></div>
<div class="b" style="left:2858.0px;top:704.0px;width:7.7px;height:359.5px;background:#47494e;border-radius:4px;"></div>
<span class="t" id="t35" style="left:2922.90px;top:122.90px;font-size:25.96px;line-height:31px;letter-spacing:0.701px;color:#ccccdc;-webkit-text-stroke:0.35px #ccccdc;">Suggestions</span>
<span class="t" id="t36" style="left:3193.80px;top:122.90px;font-size:25.96px;line-height:31px;letter-spacing:0.632px;color:#8e8f9c;-webkit-text-stroke:0.35px #8e8f9c;">All visualizations</span>
<div class="b" style="left:2863.5px;top:170.8px;width:270.3px;height:3.6px;border-radius:2px;background:linear-gradient(90deg,#ff8833,#f55f3e);"></div>
<div class="b" style="left:2892.2px;top:210.2px;width:534.6px;height:57.4px;background:#111217;border:1px solid #36383f;border-radius:10px;"></div>
<svg class="i" style="left:2905.9px;top:225.2px;" width="28.8" height="28.8" viewBox="0 0 24 24" fill="none" stroke="#8e8f9c" stroke-width="1.9" stroke-linecap="round" stroke-linejoin="round"><circle cx="11" cy="11" r="8"/><path d="M17 17l4 4"/></svg>
<span class="t" id="t37" style="left:2943.70px;top:223.70px;font-size:25.96px;line-height:31px;letter-spacing:0.219px;color:#8a8a98;-webkit-text-stroke:0.35px #8a8a98;">Search for...</span>
<div class="b" style="left:2892.0px;top:297.8px;width:4.2px;height:4.2px;background:#c0c0c8;border-radius:3px;"></div>
<div class="b" style="left:2898.9px;top:297.9px;width:32.1px;height:3.9px;background:#6b6b6b;"></div>
<div class="b" style="left:2892.0px;top:306.7px;width:4.2px;height:4.2px;background:#b8b8c2;border-radius:3px;"></div>
<div class="b" style="left:2898.9px;top:306.8px;width:22.2px;height:3.9px;background:#6b6b6b;"></div>
<div class="b" style="left:2892.0px;top:315.4px;width:4.2px;height:4.2px;background:#c0c0c8;border-radius:3px;"></div>
<div class="b" style="left:2898.9px;top:315.5px;width:17.1px;height:3.9px;background:#6b6b6b;"></div>
<div class="b" style="left:2892.0px;top:324.0px;width:4.2px;height:4.2px;background:#72727c;border-radius:3px;"></div>
<div class="b" style="left:2898.9px;top:324.1px;width:27.6px;height:3.9px;background:#6b6b6b;"></div>
<div class="b" style="left:2892.0px;top:333.0px;width:4.2px;height:4.2px;background:#b8b8c2;border-radius:3px;"></div>
<div class="b" style="left:2898.9px;top:333.1px;width:32.1px;height:3.9px;background:#6b6b6b;"></div>
<span class="t" id="t38" style="left:2945.50px;top:300.50px;font-size:25.96px;line-height:31px;letter-spacing:1.102px;color:#ccccdc;-webkit-text-stroke:0.85px #ccccdc;">Logs</span>
<div class="b" style="left:2892.2px;top:359.2px;width:534.6000000000004px;height:334.8px;border:1px solid #6e9fff;border-radius:10px;background:#2f3036;overflow:hidden;box-sizing:border-box"><div style="position:absolute;left:0;top:0;right:8px;bottom:0;overflow:hidden;filter:blur(1.4px);opacity:.38"><div class="b" style="left:25.2px;top:16.3px;width:4.200px;height:4.200px;border-radius:50%;background:#ccccdc"></div><div class="b" style="left:25.2px;top:23.6px;width:4.200px;height:4.200px;border-radius:50%;background:#ccccdc"></div><div class="b" style="left:25.2px;top:30.9px;width:4.200px;height:4.200px;border-radius:50%;background:#ccccdc"></div><span class="t m" style="left:45.30px;top:14.92px;font-size:20.55px;line-height:25px;letter-spacing:0.216px;color:#ccccdc;-webkit-text-stroke:0.98px;"><span style="color:#6ccf8e">INFO</span></span><span class="t m" style="left:127.30px;top:14.92px;font-size:20.55px;line-height:25px;letter-spacing:0.216px;color:#ccccdc;-webkit-text-stroke:0.6px;">{<span style="color:#8e8e9b">"_entry"</span>:"log text with ANSI \u001b[31mpart of the text\u001b[<span style="color:#6ccf8e">0m</span> [880676001]",<span style="color:#8e8e9b">"counter"</span>:"4481",<span style="color:#8e8e9b">"float"</span>:"14.106",<span style="color:#8e8e9b">"wave"</span>:<span style="color:#6ccf8e">0.3090169943748834</span>,<span style="color:#8e8e9b">"label"</span>:"val3",<span style="color:#8e8e9b">"level"</span>:"info"}</span><div class="b" style="left:25.2px;top:56.3px;width:4.200px;height:4.200px;border-radius:50%;background:#ccccdc"></div><div class="b" style="left:25.2px;top:63.6px;width:4.200px;height:4.200px;border-radius:50%;background:#ccccdc"></div><div class="b" style="left:25.2px;top:70.9px;width:4.200px;height:4.200px;border-radius:50%;background:#ccccdc"></div><span class="t m" style="left:45.30px;top:54.95px;font-size:20.55px;line-height:25px;letter-spacing:0.216px;color:#ccccdc;-webkit-text-stroke:0.98px;"><span style="color:#6ccf8e">INFO</span></span><span class="t m" style="left:127.30px;top:54.95px;font-size:20.55px;line-height:25px;letter-spacing:0.216px;color:#ccccdc;-webkit-text-stroke:0.6px;">_entry="log text with ANSI <span style="color:#d01c1c">part of the text</span> [880676001]" counter=4481 float=14.106 wave=0.3090169943748834 label=val3 level=info </span><div class="b" style="left:25.2px;top:96.4px;width:4.200px;height:4.200px;border-radius:50%;background:#ccccdc"></div><div class="b" style="left:25.2px;top:103.7px;width:4.200px;height:4.200px;border-radius:50%;background:#ccccdc"></div><div class="b" style="left:25.2px;top:111.0px;width:4.200px;height:4.200px;border-radius:50%;background:#ccccdc"></div><span class="t m" style="left:45.30px;top:94.98px;font-size:20.55px;line-height:25px;letter-spacing:0.216px;color:#ccccdc;-webkit-text-stroke:0.98px;"><span style="color:#6ccf8e">INFO</span></span><span class="t m" style="left:127.30px;top:94.98px;font-size:20.55px;line-height:25px;letter-spacing:0.216px;color:#ccccdc;-webkit-text-stroke:0.6px;">{<span style="color:#8e8e9b">"_entry"</span>:"log text with ANSI \u001b[31mpart of the text\u001b[<span style="color:#6ccf8e">0m</span> [658799230]",<span style="color:#8e8e9b">"counter"</span>:"3429",<span style="color:#8e8e9b">"float"</span>:"81.725",<span style="color:#8e8e9b">"wave"</span>:<span style="color:#6ccf8e">0.30901699437510055</span>,<span style="color:#8e8e9b">"label"</span>:"val1",<span style="color:#8e8e9b">"level"</span>:"info"}</span><div class="b" style="left:25.2px;top:136.4px;width:4.200px;height:4.200px;border-radius:50%;background:#ccccdc"></div><div class="b" style="left:25.2px;top:143.7px;width:4.200px;height:4.200px;border-radius:50%;background:#ccccdc"></div><div class="b" style="left:25.2px;top:151.0px;width:4.200px;height:4.200px;border-radius:50%;background:#ccccdc"></div><span class="t m" style="left:45.30px;top:135.01px;font-size:20.55px;line-height:25px;letter-spacing:0.216px;color:#ccccdc;-webkit-text-stroke:0.98px;"><span style="color:#6ccf8e">INFO</span></span><span class="t m" style="left:127.30px;top:135.01px;font-size:20.55px;line-height:25px;letter-spacing:0.216px;color:#ccccdc;-webkit-text-stroke:0.6px;">_entry="log text with ANSI <span style="color:#d01c1c">part of the text</span> [658799230]" counter=3429 float=81.725 wave=0.30901699437510055 label=val1 level=info </span><div class="b" style="left:25.2px;top:176.4px;width:4.200px;height:4.200px;border-radius:50%;background:#ccccdc"></div><div class="b" style="left:25.2px;top:183.7px;width:4.200px;height:4.200px;border-radius:50%;background:#ccccdc"></div><div class="b" style="left:25.2px;top:191.0px;width:4.200px;height:4.200px;border-radius:50%;background:#ccccdc"></div><span class="t m" style="left:45.30px;top:175.04px;font-size:20.55px;line-height:25px;letter-spacing:0.216px;color:#ccccdc;-webkit-text-stroke:0.98px;"><span style="color:#ff5286">ERROR</span></span><span class="t m" style="left:127.30px;top:175.04px;font-size:20.55px;line-height:25px;letter-spacing:0.216px;color:#ccccdc;-webkit-text-stroke:0.6px;">{<span style="color:#8e8e9b">"_entry"</span>:"log text  [440071092]",<span style="color:#8e8e9b">"counter"</span>:"2284",<span style="color:#8e8e9b">"float"</span>:"82.181",<span style="color:#8e8e9b">"wave"</span>:<span style="color:#6ccf8e">0.9510565162951515</span>,<span style="color:#8e8e9b">"label"</span>:"val2",<span style="color:#8e8e9b">"level"</span>:"error"}</span><div class="b" style="left:25.2px;top:216.5px;width:4.200px;height:4.200px;border-radius:50%;background:#ccccdc"></div><div class="b" style="left:25.2px;top:223.8px;width:4.200px;height:4.200px;border-radius:50%;background:#ccccdc"></div><div class="b" style="left:25.2px;top:231.1px;width:4.200px;height:4.200px;border-radius:50%;background:#ccccdc"></div><span class="t m" style="left:45.30px;top:215.07px;font-size:20.55px;line-height:25px;letter-spacing:0.216px;color:#ccccdc;-webkit-text-stroke:0.98px;"><span style="color:#ff5286">ERROR</span></span><span class="t m" style="left:127.30px;top:215.07px;font-size:20.55px;line-height:25px;letter-spacing:0.216px;color:#ccccdc;-webkit-text-stroke:0.6px;"><span style="color:#8e8e9b">_entry</span>="log text  [440071092]" <span style="color:#8e8e9b">counter</span>=2284 <span style="color:#8e8e9b">float</span>=82.181 <span style="color:#8e8e9b">wave</span>=0.9510565162951515 <span style="color:#8e8e9b">label</span>=val2 <span style="color:#8e8e9b">level</span>=error </span><div class="b" style="left:25.2px;top:256.5px;width:4.200px;height:4.200px;border-radius:50%;background:#ccccdc"></div><div class="b" style="left:25.2px;top:263.8px;width:4.200px;height:4.200px;border-radius:50%;background:#ccccdc"></div><div class="b" style="left:25.2px;top:271.1px;width:4.200px;height:4.200px;border-radius:50%;background:#ccccdc"></div><span class="t m" style="left:45.30px;top:255.10px;font-size:20.55px;line-height:25px;letter-spacing:0.216px;color:#ccccdc;-webkit-text-stroke:0.98px;"><span style="color:#ff5286">ERROR</span></span><span class="t m" style="left:127.30px;top:255.10px;font-size:20.55px;line-height:25px;letter-spacing:0.216px;color:#ccccdc;-webkit-text-stroke:0.6px;">{<span style="color:#8e8e9b">"_entry"</span>:"log text with ANSI \u001b[31mpart of the text\u001b[<span style="color:#6ccf8e">0m</span> [187881167]",<span style="color:#8e8e9b">"counter"</span>:"1721",<span style="color:#8e8e9b">"float"</span>:"83.094",<span style="color:#8e8e9b">"wave"</span>:<span style="color:#6ccf8e">0.30901699437490204</span>,<span style="color:#8e8e9b">"label"</span>:"val2",<span style="color:#8e8e9b">"level"</span>:"error"}</span><div class="b" style="left:25.2px;top:296.5px;width:4.200px;height:4.200px;border-radius:50%;background:#ccccdc"></div><div class="b" style="left:25.2px;top:303.8px;width:4.200px;height:4.200px;border-radius:50%;background:#ccccdc"></div><div class="b" style="left:25.2px;top:311.1px;width:4.200px;height:4.200px;border-radius:50%;background:#ccccdc"></div><span class="t m" style="left:45.30px;top:295.13px;font-size:20.55px;line-height:25px;letter-spacing:0.216px;color:#ccccdc;-webkit-text-stroke:0.98px;"><span style="color:#ff5286">ERROR</span></span><span class="t m" style="left:127.30px;top:295.13px;font-size:20.55px;line-height:25px;letter-spacing:0.216px;color:#ccccdc;-webkit-text-stroke:0.6px;">_entry="log text with ANSI <span style="color:#d01c1c">part of the text</span> [187881167]" counter=1721 float=83.094 wave=0.30901699437490204 label=val2 level=error </span></div></div>
<div class="b" style="left:3009.0px;top:502.4px;width:302.0px;height:56.6px;background:#3d71d9;border-radius:9px;"></div>
<span class="t" id="t39" style="left:3038.50px;top:515.10px;font-size:25.96px;line-height:31px;letter-spacing:0.836px;color:#ffffff;-webkit-text-stroke:0.85px #ffffff;">Use this suggestion</span>
<div class="b" style="left:2892.0px;top:746.8px;width:11.7px;height:6.3px;background:#c3c3c3;"></div>
<div class="b" style="left:2905.9px;top:746.8px;width:11.7px;height:6.3px;background:#c3c3c3;"></div>
<div class="b" style="left:2919.8px;top:746.8px;width:11.7px;height:6.3px;background:#c3c3c3;"></div>
<div class="b" style="left:2892.0px;top:755.1px;width:11.7px;height:6.3px;background:#adadad;"></div>
<div class="b" style="left:2905.9px;top:755.1px;width:11.7px;height:6.3px;background:#adadad;"></div>
<div class="b" style="left:2919.8px;top:755.1px;width:11.7px;height:6.3px;background:#adadad;"></div>
<div class="b" style="left:2892.0px;top:763.4px;width:11.7px;height:6.3px;background:#666666;"></div>
<div class="b" style="left:2905.9px;top:763.4px;width:11.7px;height:6.3px;background:#666666;"></div>
<div class="b" style="left:2919.8px;top:763.4px;width:11.7px;height:6.3px;background:#666666;"></div>
<div class="b" style="left:2892.0px;top:771.7px;width:11.7px;height:6.3px;background:#adadad;"></div>
<div class="b" style="left:2905.9px;top:771.7px;width:11.7px;height:6.3px;background:#adadad;"></div>
<div class="b" style="left:2919.8px;top:771.7px;width:11.7px;height:6.3px;background:#adadad;"></div>
<div class="b" style="left:2892.0px;top:780.0px;width:11.7px;height:6.3px;background:#666666;"></div>
<div class="b" style="left:2905.9px;top:780.0px;width:11.7px;height:6.3px;background:#666666;"></div>
<div class="b" style="left:2919.8px;top:780.0px;width:11.7px;height:6.3px;background:#666666;"></div>
<span class="t" id="t40" style="left:2946.10px;top:749.80px;font-size:25.96px;line-height:31px;letter-spacing:1.034px;color:#ccccdc;-webkit-text-stroke:0.85px #ccccdc;">Table</span>
<div class="b" style="left:2892.3px;top:808.4px;width:534.5px;height:333.3px;background:#181b1f;border:1px solid #2e3036;border-radius:10px;"></div>
<div class="b" style="left:2904.0px;top:870.3px;width:513.7px;height:1.2px;background:#24262c;"></div>
<div class="b" style="left:2904.0px;top:921.7px;width:513.7px;height:1.2px;background:#24262c;"></div>
<div class="b" style="left:2904.0px;top:973.2px;width:513.7px;height:1.2px;background:#24262c;"></div>
<div class="b" style="left:2904.0px;top:1024.6px;width:513.7px;height:1.2px;background:#24262c;"></div>
<div class="b" style="left:2904.0px;top:1076.1px;width:513.7px;height:1.2px;background:#24262c;"></div>
<div class="b" style="left:2904.0px;top:1127.5px;width:513.7px;height:1.2px;background:#24262c;"></div>
<div class="b" style="left:2904px;top:822.3px;width:218.5px;height:40px;overflow:hidden"></div>
<div class="b" style="left:2904px;top:873.7px;width:218.5px;height:40px;overflow:hidden"></div>
<div class="b" style="left:2904px;top:925.2px;width:218.5px;height:40px;overflow:hidden"></div>
<div class="b" style="left:2904px;top:976.6px;width:218.5px;height:40px;overflow:hidden"></div>
<div class="b" style="left:2904px;top:1028.1px;width:218.5px;height:40px;overflow:hidden"></div>
<div class="b" style="left:2904px;top:1079.5px;width:218.5px;height:40px;overflow:hidden"></div>
<div class="b" style="left:2912.5px;top:833.4px;width:210.3px;height:24px;overflow:hidden"><span class="t" style="left:1px;top:0;font-size:20.0px;line-height:24px;letter-spacing:1.355px;color:#ccccdc;-webkit-text-stroke:0.25px">{ "age": "new", "detec</span></div>
<div class="b" style="left:3132.6px;top:833.4px;width:210.2px;height:24px;overflow:hidden"><span class="t" style="left:1px;top:0;font-size:20.0px;line-height:24px;letter-spacing:0.865px;color:#ccccdc;-webkit-text-stroke:0.25px">2026-01-06 16:14:42.1</span></div>
<div class="b" style="left:3353.0px;top:833.4px;width:64.7px;height:24px;overflow:hidden"><span class="t" style="left:1px;top:0;font-size:20.0px;line-height:24px;letter-spacing:0.619px;color:#ccccdc;-webkit-text-stroke:0.25px">{"_entry</span></div>
<div class="b" style="left:2912.5px;top:884.8px;width:210.3px;height:24px;overflow:hidden"><span class="t" style="left:1px;top:0;font-size:20.0px;line-height:24px;letter-spacing:1.355px;color:#ccccdc;-webkit-text-stroke:0.25px">{ "age": "new", "detec</span></div>
<div class="b" style="left:3132.6px;top:884.8px;width:210.2px;height:24px;overflow:hidden"><span class="t" style="left:1px;top:0;font-size:20.0px;line-height:24px;letter-spacing:0.865px;color:#ccccdc;-webkit-text-stroke:0.25px">2026-01-06 16:14:41.9</span></div>
<div class="b" style="left:3353.0px;top:884.8px;width:64.7px;height:24px;overflow:hidden"><span class="t" style="left:1px;top:0;font-size:20.0px;line-height:24px;letter-spacing:0.619px;color:#ccccdc;-webkit-text-stroke:0.25px">{"_entry</span></div>
<div class="b" style="left:2912.5px;top:936.2px;width:210.3px;height:24px;overflow:hidden"><span class="t" style="left:1px;top:0;font-size:20.0px;line-height:24px;letter-spacing:1.355px;color:#ccccdc;-webkit-text-stroke:0.25px">{ "age": "new", "detec</span></div>
<div class="b" style="left:3132.6px;top:936.2px;width:210.2px;height:24px;overflow:hidden"><span class="t" style="left:1px;top:0;font-size:20.0px;line-height:24px;letter-spacing:0.865px;color:#ccccdc;-webkit-text-stroke:0.25px">2026-01-06 16:14:41.2</span></div>
<div class="b" style="left:3353.0px;top:936.2px;width:64.7px;height:24px;overflow:hidden"><span class="t" style="left:1px;top:0;font-size:20.0px;line-height:24px;letter-spacing:0.619px;color:#ccccdc;-webkit-text-stroke:0.25px">{"_entry</span></div>
<div class="b" style="left:2912.5px;top:987.7px;width:210.3px;height:24px;overflow:hidden"><span class="t" style="left:1px;top:0;font-size:20.0px;line-height:24px;letter-spacing:1.355px;color:#ccccdc;-webkit-text-stroke:0.25px">{ "age": "new", "detec</span></div>
<div class="b" style="left:3132.6px;top:987.7px;width:210.2px;height:24px;overflow:hidden"><span class="t" style="left:1px;top:0;font-size:20.0px;line-height:24px;letter-spacing:0.865px;color:#ccccdc;-webkit-text-stroke:0.25px">2026-01-06 16:14:40.7</span></div>
<div class="b" style="left:3353.0px;top:987.7px;width:64.7px;height:24px;overflow:hidden"><span class="t" style="left:1px;top:0;font-size:20.0px;line-height:24px;letter-spacing:0.619px;color:#ccccdc;-webkit-text-stroke:0.25px">{"_entry</span></div>
<div class="b" style="left:2912.5px;top:1039.1px;width:210.3px;height:24px;overflow:hidden"><span class="t" style="left:1px;top:0;font-size:20.0px;line-height:24px;letter-spacing:1.355px;color:#ccccdc;-webkit-text-stroke:0.25px">{ "age": "new", "detec</span></div>
<div class="b" style="left:3132.6px;top:1039.1px;width:210.2px;height:24px;overflow:hidden"><span class="t" style="left:1px;top:0;font-size:20.0px;line-height:24px;letter-spacing:0.865px;color:#ccccdc;-webkit-text-stroke:0.25px">2026-01-06 16:14:40.1</span></div>
<div class="b" style="left:3353.0px;top:1039.1px;width:64.7px;height:24px;overflow:hidden"><span class="t" style="left:1px;top:0;font-size:20.0px;line-height:24px;letter-spacing:0.619px;color:#ccccdc;-webkit-text-stroke:0.25px">{"_entry</span></div>
<div class="b" style="left:2912.5px;top:1090.6px;width:210.3px;height:24px;overflow:hidden"><span class="t" style="left:1px;top:0;font-size:20.0px;line-height:24px;letter-spacing:1.355px;color:#ccccdc;-webkit-text-stroke:0.25px">{ "age": "new", "detec</span></div>
<div class="b" style="left:3132.6px;top:1090.6px;width:210.2px;height:24px;overflow:hidden"><span class="t" style="left:1px;top:0;font-size:20.0px;line-height:24px;letter-spacing:0.865px;color:#ccccdc;-webkit-text-stroke:0.25px">2026-01-06 16:14:39.6</span></div>
<div class="b" style="left:3353.0px;top:1090.6px;width:64.7px;height:24px;overflow:hidden"><span class="t" style="left:1px;top:0;font-size:20.0px;line-height:24px;letter-spacing:0.619px;color:#ccccdc;-webkit-text-stroke:0.25px">{"_entry</span></div>
<div class="b" style="left:3123.0px;top:820.0px;width:1.2px;height:313.0px;background:#24262c;"></div>
<div class="b" style="left:3343.0px;top:820.0px;width:1.2px;height:313.0px;background:#24262c;"></div>
</div><div id="frame"></div></body></html>
